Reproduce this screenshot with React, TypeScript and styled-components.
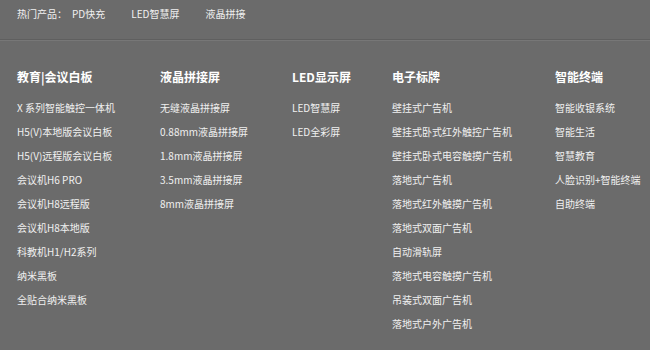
import React from 'react';
import styled, { createGlobalStyle } from 'styled-components';

const Global = createGlobalStyle`
  html, body { margin: 0; padding: 0; background: #6b6b6b; }
  body { font-family: "Microsoft YaHei", "Noto Sans CJK SC", sans-serif; }
`;

const Page_ = styled.div`
  width: 650px;
  height: 350px;
  background: #6b6b6b;
  overflow: hidden;
`;

const HotBar_ = styled.div`
  display: flex;
  align-items: flex-start;
  height: 33px;
  padding: 6px 17px 0;
  border-bottom: 1px solid #5f5f5f;
  box-shadow: 0 1px 0 #777;
  font-size: 10px;
  line-height: 16px;
  color: #f0f0f0;
`;

const HotLabel_ = styled.span`
  margin-right: 5px;
`;

const HotItem_ = styled.a`
  color: #f0f0f0;
  text-decoration: none;
  & + & {
    margin-left: 26px;
  }
`;

const Menu_ = styled.div`
  display: grid;
  grid-template-columns: 143px 132px 100px 163px 1fr;
  padding: 28px 0 0 17px;
`;

const Column_ = styled.div`
  display: flex;
  flex-direction: column;
`;

const Heading_ = styled.h3`
  margin: 0 0 10px;
  height: 18px;
  line-height: 18px;
  font-size: 12px;
  font-weight: bold;
  color: #fff;
`;

const Item_ = styled.a`
  display: block;
  height: 24px;
  line-height: 24px;
  font-size: 10px;
  color: #f0f0f0;
  text-decoration: none;
  white-space: nowrap;
`;

const columns: { title: string; items: string[] }[] = [
  {
    title: '教育|会议白板',
    items: [
      'X 系列智能触控一体机',
      'H5(V)本地版会议白板',
      'H5(V)远程版会议白板',
      '会议机H6 PRO',
      '会议机H8远程版',
      '会议机H8本地版',
      '科教机H1/H2系列',
      '纳米黑板',
      '全贴合纳米黑板',
    ],
  },
  {
    title: '液晶拼接屏',
    items: ['无缝液晶拼接屏', '0.88mm液晶拼接屏', '1.8mm液晶拼接屏', '3.5mm液晶拼接屏', '8mm液晶拼接屏'],
  },
  { title: 'LED显示屏', items: ['LED智慧屏', 'LED全彩屏'] },
  {
    title: '电子标牌',
    items: [
      '壁挂式广告机',
      '壁挂式卧式红外触控广告机',
      '壁挂式卧式电容触摸广告机',
      '落地式广告机',
      '落地式红外触摸广告机',
      '落地式双面广告机',
      '自动滑轨屏',
      '落地式电容触摸广告机',
      '吊装式双面广告机',
      '落地式户外广告机',
    ],
  },
  {
    title: '智能终端',
    items: ['智能收银系统', '智能生活', '智慧教育', '人脸识别+智能终端', '自助终端'],
  },
];

const App = () => (
  <Page_>
    <Global />
    <HotBar_>
      <HotLabel_>热门产品：</HotLabel_>
      <HotItem_ href="#">PD快充</HotItem_>
      <HotItem_ href="#">LED智慧屏</HotItem_>
      <HotItem_ href="#">液晶拼接</HotItem_>
    </HotBar_>
    <Menu_>
      {columns.map((col) => (
        <Column_ key={col.title}>
          <Heading_>{col.title}</Heading_>
          {col.items.map((it) => (
            <Item_ href="#" key={it}>{it}</Item_>
          ))}
        </Column_>
      ))}
    </Menu_>
  </Page_>
);

export default App;
